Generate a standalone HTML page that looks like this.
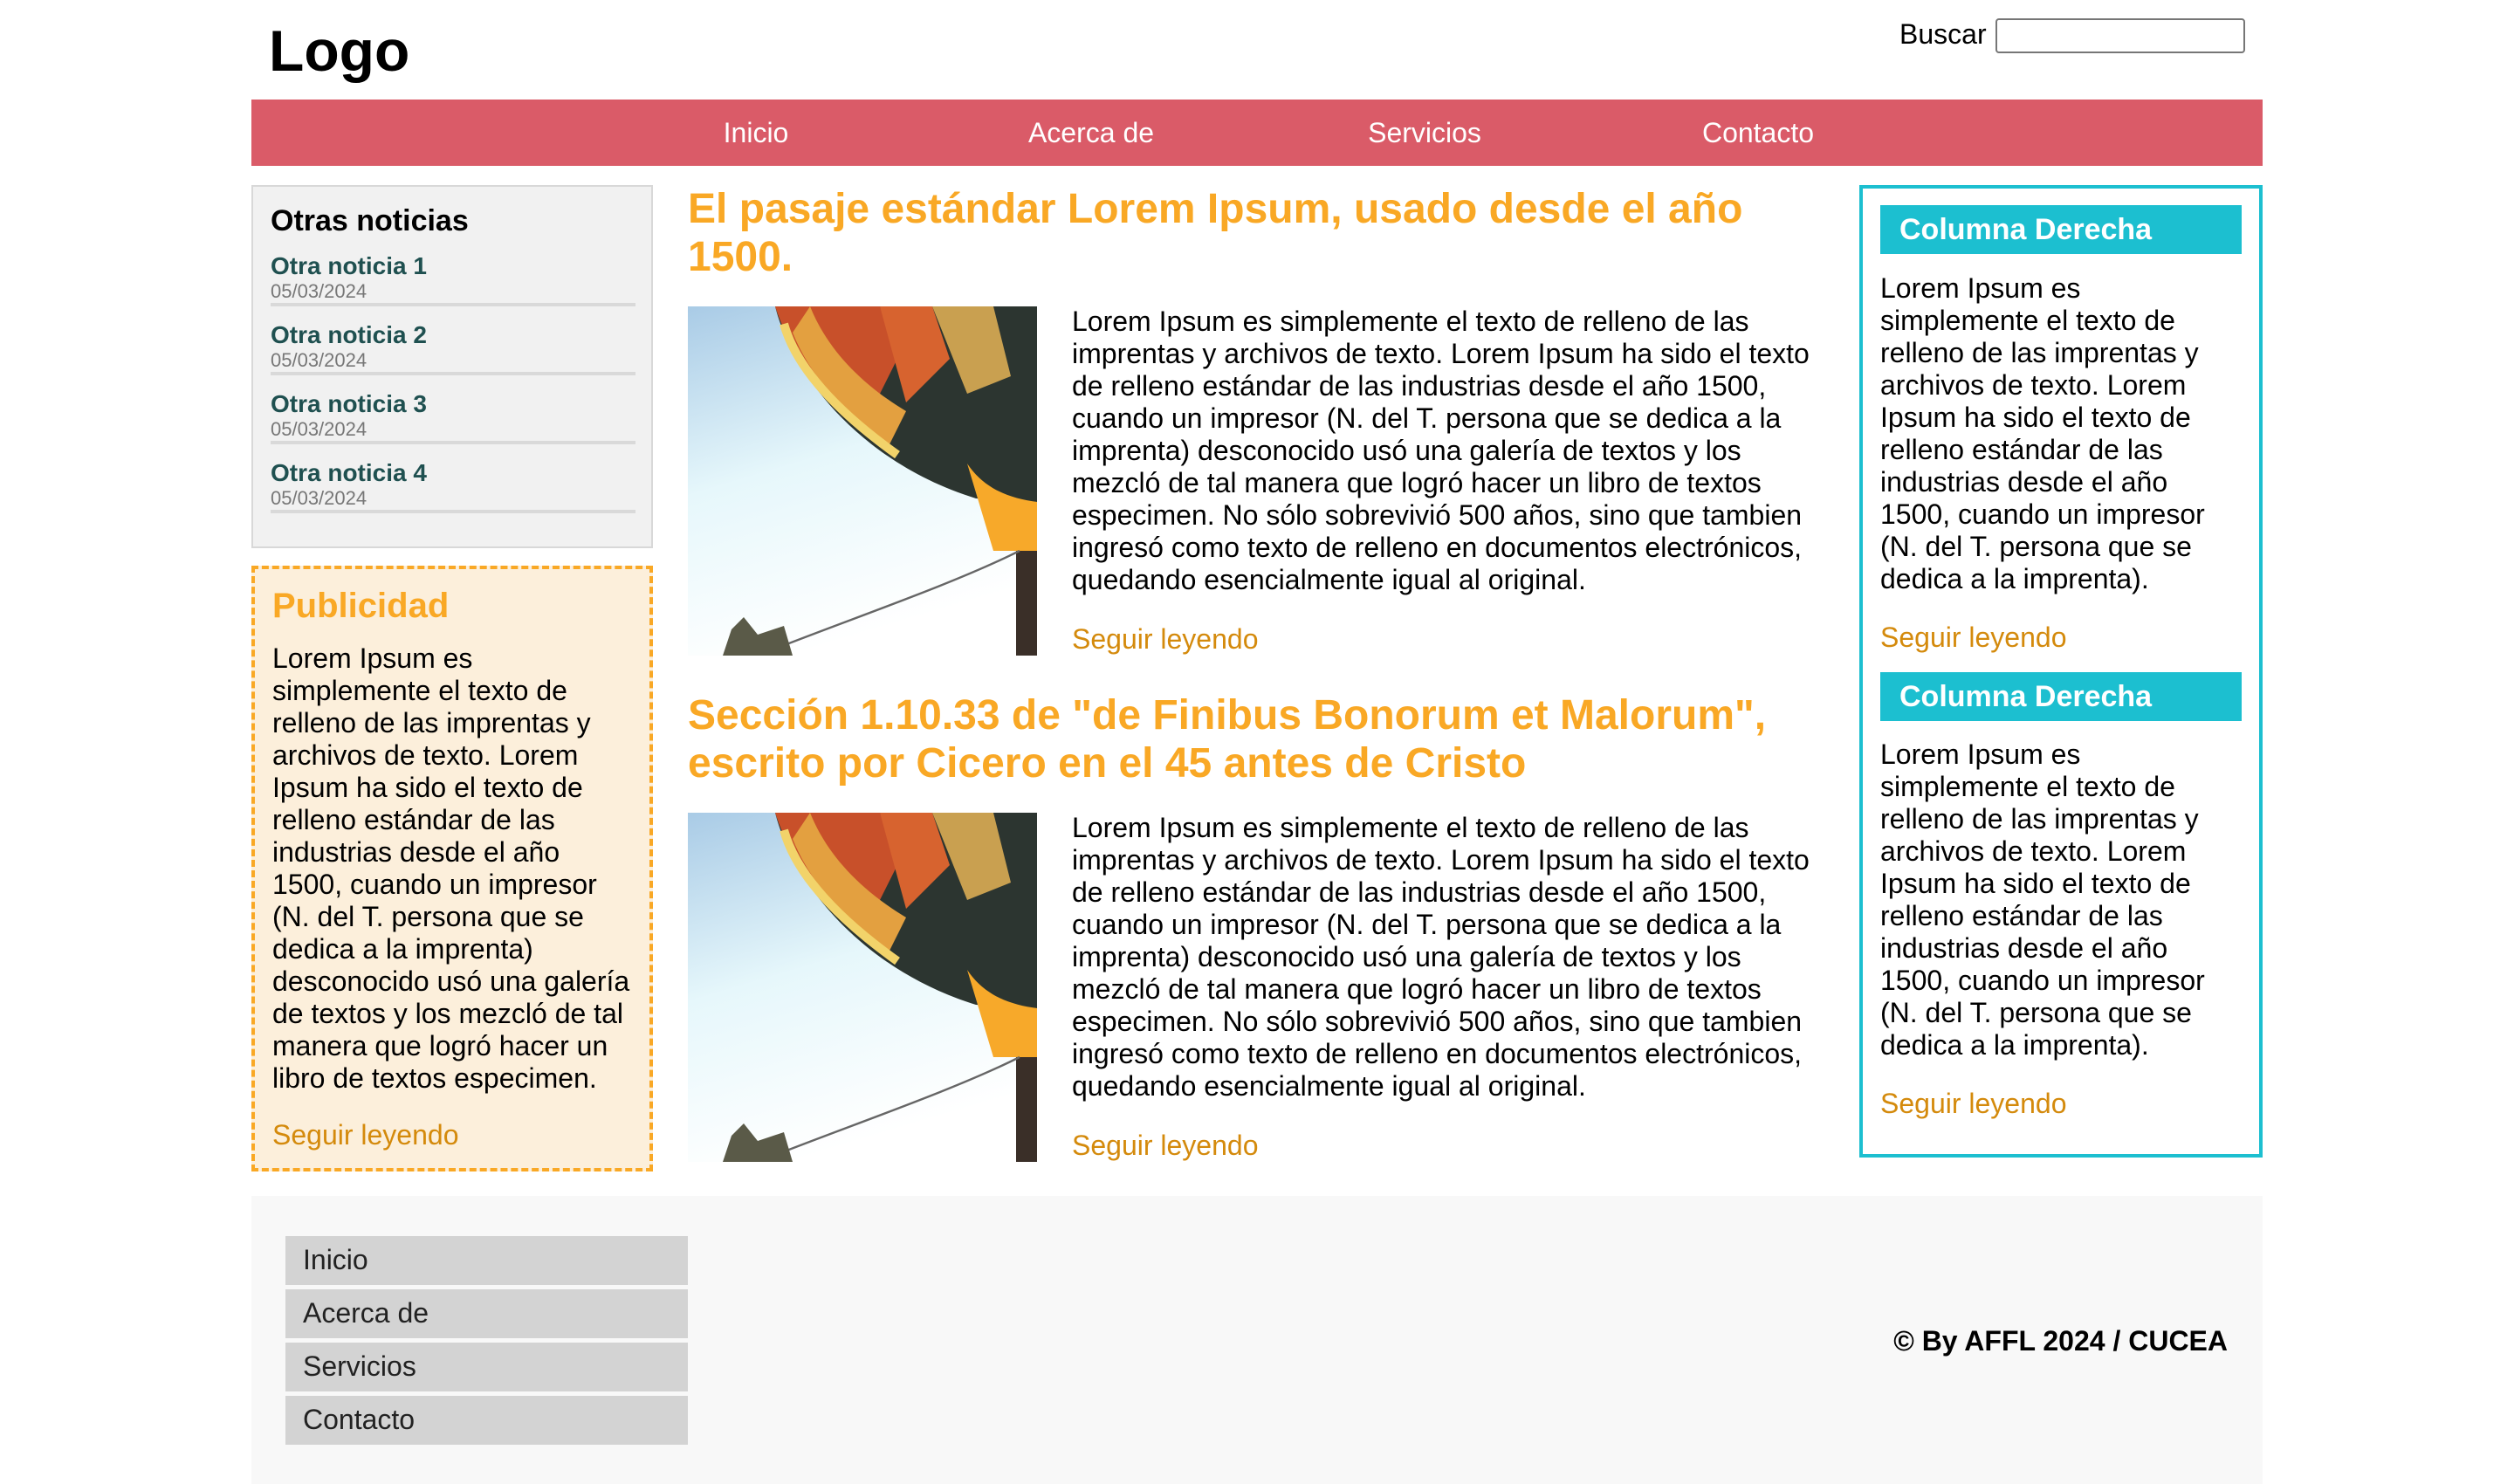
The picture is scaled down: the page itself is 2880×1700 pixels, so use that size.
<!DOCTYPE html>
<html><head><meta charset="utf-8"><style>
html{zoom:2}
body{margin:0;width:1440px;height:850px;position:relative;background:#fff;font-family:"Liberation Sans",Arial,sans-serif;color:#000;overflow:hidden}
.a{position:absolute}
p{margin:0}
.t{font-size:16px;line-height:18.5px}
.more{color:#d48a0c;font-size:16px}
.nav a{position:absolute;top:57px;line-height:38px;color:#fff;font-size:16px;transform:translateX(-50%);text-decoration:none}
.item{position:absolute;left:10px;width:209px;border-bottom:2px solid #d9d9d9;height:29px}
.item b{display:block;color:#1f5050;font-size:14px;line-height:16px;margin-top:0}
.item span{display:block;color:#777;font-size:11px;line-height:13px}
h2{margin:0;position:absolute;color:#f9a825;font-size:24px;line-height:27.5px;font-weight:bold}
.hd{position:absolute;left:10px;width:207px;height:28px;background:#1cbfd0;color:#fff;font-weight:bold;font-size:17px;line-height:28px;box-sizing:border-box;padding-left:11px}
.fm{position:absolute;left:19.5px;width:230.5px;height:27.8px;background:#d3d3d3;color:#222;font-size:16px;line-height:27.8px;padding-left:10px;box-sizing:border-box}
</style></head><body>
<div class="a" style="left:154px;top:10px;font-size:33px;font-weight:bold;line-height:38px">Logo</div>
<div class="a" style="left:1088px;top:10px;font-size:16px;line-height:19px">Buscar</div>
<div class="a" style="left:1143px;top:10.5px;width:141px;height:18px;border:1px solid #767676;border-radius:2px"></div>
<div class="a" style="left:144px;top:57px;width:1152px;height:38px;background:#da5b68"></div>
<div class="nav"><a style="left:433px">Inicio</a><a style="left:625px">Acerca de</a><a style="left:816px">Servicios</a><a style="left:1007px">Contacto</a></div>

<div class="a" style="left:144px;top:106px;width:228px;height:206px;background:#f1f1f1;border:1px solid #d8d8d8">
<div class="a" style="left:10px;top:10px;font-size:17px;font-weight:bold">Otras noticias</div>
<div class="item" style="top:37.5px"><b>Otra noticia 1</b><span>05/03/2024</span></div>
<div class="item" style="top:77px"><b>Otra noticia 2</b><span>05/03/2024</span></div>
<div class="item" style="top:116.5px"><b>Otra noticia 3</b><span>05/03/2024</span></div>
<div class="item" style="top:156px"><b>Otra noticia 4</b><span>05/03/2024</span></div>
</div>

<div class="a" style="left:144px;top:324px;width:226px;height:343px;background:#fcefdb;border:2px dashed #f9a825">
<div class="a" style="left:10px;top:10px;font-size:20px;font-weight:bold;color:#f9a825">Publicidad</div>
<p class="a t" style="left:10px;top:42px;width:206px">Lorem Ipsum es simplemente el texto de relleno de las imprentas y archivos de texto. Lorem Ipsum ha sido el texto de relleno estándar de las industrias desde el año 1500, cuando un impresor (N. del T. persona que se dedica a la imprenta) desconocido usó una galería de textos y los mezcló de tal manera que logró hacer un libro de textos especimen.</p>
<div class="a more" style="left:10px;top:315px">Seguir leyendo</div>
</div>

<svg width="0" height="0" style="position:absolute"><defs>
<linearGradient id="sky" x1="0" y1="0" x2="0.3" y2="1"><stop offset="0" stop-color="#a9cbe6"/><stop offset="0.5" stop-color="#e6f7fb"/><stop offset="1" stop-color="#fff"/></linearGradient>
<g id="bal">
<rect width="200" height="200" fill="url(#sky)"/>
<path d="M50 0 C60 40 100 90 165 110 L200 112 L200 0Z" fill="#2c3530"/>
<path d="M50 0 C58 25 75 50 100 70 L120 30 L110 0Z" fill="#c8502a"/>
<path d="M60 15 C70 40 90 62 115 80 L125 60 C100 45 80 25 70 0Z" fill="#e3a040"/>
<path d="M110 0 L140 0 L150 30 L125 55Z" fill="#d7632f"/>
<path d="M140 0 L175 0 L185 40 L160 50Z" fill="#c9a050"/>
<path d="M55 10 C62 35 85 60 120 85" stroke="#f2d36a" stroke-width="5" fill="none"/>
<path d="M160 90 C170 105 185 110 200 112 L200 140 L175 140Z" fill="#f7a92a"/>
<rect x="188" y="140" width="12" height="60" fill="#3a2f28"/>
<path d="M40 200 C90 180 150 160 190 140" stroke="#666" stroke-width="1.2" fill="none"/>
<path d="M20 200 L25 185 L32 178 L40 188 L55 183 L60 200Z" fill="#5a5a48"/>
</g></defs></svg>

<h2 style="left:394px;top:106px;width:650px">El pasaje estándar Lorem Ipsum, usado desde el año 1500.</h2>
<svg class="a" style="left:394px;top:175.5px" width="200" height="200"><use href="#bal"/></svg>
<p class="a t" style="left:614px;top:175px;width:430px">Lorem Ipsum es simplemente el texto de relleno de las imprentas y archivos de texto. Lorem Ipsum ha sido el texto de relleno estándar de las industrias desde el año 1500, cuando un impresor (N. del T. persona que se dedica a la imprenta) desconocido usó una galería de textos y los mezcló de tal manera que logró hacer un libro de textos especimen. No sólo sobrevivió 500 años, sino que tambien ingresó como texto de relleno en documentos electrónicos, quedando esencialmente igual al original.</p>
<div class="a more" style="left:614px;top:357px">Seguir leyendo</div>

<h2 style="left:394px;top:396px;width:650px">Sección 1.10.33 de "de Finibus Bonorum et Malorum", escrito por Cicero en el 45 antes de Cristo</h2>
<svg class="a" style="left:394px;top:465.5px" width="200" height="200"><use href="#bal"/></svg>
<p class="a t" style="left:614px;top:465px;width:430px">Lorem Ipsum es simplemente el texto de relleno de las imprentas y archivos de texto. Lorem Ipsum ha sido el texto de relleno estándar de las industrias desde el año 1500, cuando un impresor (N. del T. persona que se dedica a la imprenta) desconocido usó una galería de textos y los mezcló de tal manera que logró hacer un libro de textos especimen. No sólo sobrevivió 500 años, sino que tambien ingresó como texto de relleno en documentos electrónicos, quedando esencialmente igual al original.</p>
<div class="a more" style="left:614px;top:647px">Seguir leyendo</div>

<div class="a" style="left:1065px;top:106px;width:227px;height:553px;border:2px solid #1cbfd0">
<div class="hd" style="top:9.5px">Columna Derecha</div>
<p class="a t" style="left:10px;top:48px;width:206px">Lorem Ipsum es simplemente el texto de relleno de las imprentas y archivos de texto. Lorem Ipsum ha sido el texto de relleno estándar de las industrias desde el año 1500, cuando un impresor (N. del T. persona que se dedica a la imprenta).</p>
<div class="a more" style="left:10px;top:248px">Seguir leyendo</div>
<div class="hd" style="top:277px">Columna Derecha</div>
<p class="a t" style="left:10px;top:315px;width:206px">Lorem Ipsum es simplemente el texto de relleno de las imprentas y archivos de texto. Lorem Ipsum ha sido el texto de relleno estándar de las industrias desde el año 1500, cuando un impresor (N. del T. persona que se dedica a la imprenta).</p>
<div class="a more" style="left:10px;top:515px">Seguir leyendo</div>
</div>

<div class="a" style="left:144px;top:685px;width:1152px;height:165px;background:#f8f8f8">
<div class="fm" style="top:23px">Inicio</div>
<div class="fm" style="top:53.5px">Acerca de</div>
<div class="fm" style="top:84px">Servicios</div>
<div class="fm" style="top:114.5px">Contacto</div>
<div class="a" style="right:20px;top:74px;font-size:16px;font-weight:bold">© By AFFL 2024 / CUCEA</div>
</div>
</body></html>
